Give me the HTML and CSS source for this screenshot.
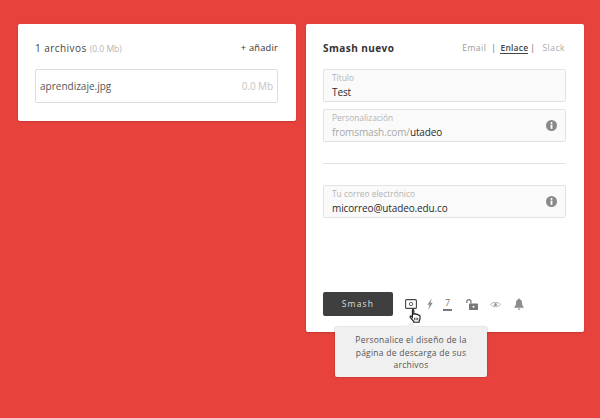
FILE: index.html
```html
<!DOCTYPE html>
<html lang="es">
<head>
    <meta charset="UTF-8"/>
    <title>Smash</title>
    <link rel="stylesheet" href="styles.css">
</head>
<body>
<main class="page">
    <section class="card files-card">
        <div class="card-head">
            <div class="files-title">1 archivos <span class="files-size">(0.0 Mb)</span></div>
            <div class="add-link">+ añadir</div>
        </div>
        <div class="file-row">
            <span class="file-name">aprendizaje.jpg</span>
            <span class="file-size">0.0 Mb</span>
        </div>
    </section>

    <section class="card smash-card">
        <div class="card-head">
            <div class="smash-title">Smash nuevo</div>
            <nav class="tabs">
                <span class="tab">Email</span>
                <span class="tab-sep sep-first">|</span>
                <span class="tab tab-active">Enlace</span>
                <span class="tab-sep sep-second">|</span>
                <span class="tab tab-last">Slack</span>
            </nav>
        </div>

        <div class="field">
            <div class="field-text">
                <div class="field-label">Título</div>
                <div class="field-value">Test</div>
            </div>
        </div>
        <div class="field field-second">
            <div class="field-text">
                <div class="field-label">Personalización</div>
                <div class="field-value"><span class="muted">fromsmash.com/</span>utadeo</div>
            </div>
            <svg class="info" viewBox="0 0 12 12"><circle cx="6" cy="6" r="6" fill="#8a8a8a"/><rect x="5" y="5" width="2" height="4.6" fill="#fff"/><circle cx="6" cy="3.2" r="1.1" fill="#fff"/></svg>
        </div>

        <hr class="divider">

        <div class="field">
            <div class="field-text">
                <div class="field-label">Tu correo electrónico</div>
                <div class="field-value">micorreo@utadeo.edu.co</div>
            </div>
            <svg class="info" viewBox="0 0 12 12"><circle cx="6" cy="6" r="6" fill="#8a8a8a"/><rect x="5" y="5" width="2" height="4.6" fill="#fff"/><circle cx="6" cy="3.2" r="1.1" fill="#fff"/></svg>
        </div>

        <div class="toolbar">
            <div class="smash-btn">Smash</div>
            <svg class="tool tool-camera" width="12" height="10" viewBox="0 0 12 10"><rect x="0.6" y="0.6" width="10.8" height="8.8" rx="1" fill="none" stroke="#444" stroke-width="1.1"/><circle cx="6" cy="5" r="1.7" fill="none" stroke="#555" stroke-width="0.9"/></svg>
            <svg class="tool tool-bolt" width="6" height="12" viewBox="0 0 6 12"><path d="M5 0 0.4 6.800H2.500L1.200 12 5.700 4.800H3.400Z" fill="#8c8c8c"/></svg>
            <div class="tool tool-days">7</div>
            <svg class="tool tool-lock" width="12" height="11" viewBox="0 0 12 11"><path d="M0.8 4V2.700a2.100 2.100 0 0 1 4.200 0V4.500" fill="none" stroke="#777" stroke-width="1.2"/><rect x="3" y="4.500" width="9" height="6.500" rx="0.6" fill="#777"/><circle cx="7.500" cy="7.700" r="1" fill="#fff"/></svg>
            <svg class="tool tool-eye" width="11" height="7" viewBox="0 0 11 7"><path d="M0.500 3.500C2.500 0.700 8.500 0.700 10.500 3.500C8.500 6.300 2.500 6.300 0.500 3.500Z" fill="none" stroke="#aaa" stroke-width="0.9"/><circle cx="5.500" cy="3.500" r="1.500" fill="#999"/></svg>
            <svg class="tool tool-bell" width="10" height="12" viewBox="0 0 10 12"><path d="M5 0.500C5.600 0.500 6 1 6 1.500C7.500 2 8 3.200 8 5C8 7 8.700 8 9.700 9V9.800H0.300V9C1.300 8 2 7 2 5C2 3.200 2.500 2 4 1.500C4 1 4.400 0.500 5 0.500ZM3.800 10.500H6.200C6.200 11.200 5.700 11.800 5 11.800C4.300 11.800 3.800 11.200 3.800 10.500Z" fill="#8c8c8c"/></svg>
        </div>
    </section>
</main>

<svg class="cursor" width="12" height="14" viewBox="0 0 14 16"><path d="M4 1.200C4 0.500 5.600 0.500 5.600 1.200V6L7 5.600C7.500 5.400 8.200 5.600 8.300 6.100L9.500 6.100C10 6 10.500 6.300 10.600 6.800L11.500 6.900C12.300 7 12.800 7.500 12.800 8.300V11C12.800 12.300 12.300 13 11.800 14V15.300H5.500V14.300C4.500 13 3 11.500 1.500 9.500C0.800 8.500 1.800 7.500 2.700 8.200L4 9.500Z" fill="#fff" stroke="#222" stroke-width="1.4"/><path d="M6.500 10V13M8.300 10V13M10.100 10V13" stroke="#222" stroke-width="0.9"/></svg>

<div class="tooltip">Personalice el diseño de la página de descarga de sus archivos</div>
</body>
</html>
```

FILE: styles.css
```css
html, body {
    height: 100%;
    margin: 0;
    padding: 0;
}

body {
    background-color: #e7423c;
    font-family: "Open Sans", Arial, sans-serif;
    color: #333;
    position: relative;
    overflow: hidden;
}

.page {
    display: flex;
    align-items: flex-start;
    gap: 10px;
    padding: 24px 0 0 18px;
}

.card {
    background-color: #fff;
    border-radius: 2px;
    box-shadow: 0 1px 2px rgba(0, 0, 0, 0.15);
    box-sizing: border-box;
}

.files-card {
    width: 278px;
    height: 97px;
    padding: 15px 18px 0 17px;
}

.smash-card {
    width: 278px;
    height: 308px;
    padding: 15px 18px 0 17px;
}

.card-head {
    display: flex;
    justify-content: space-between;
    align-items: center;
    height: 17px;
    margin-bottom: 13px;
}

.files-title {
    font-size: 10px;
    letter-spacing: 0.45px;
    color: #444;
}

.files-size {
    font-size: 8.5px;
    letter-spacing: 0;
    color: #b5b5b5;
}

.add-link {
    font-size: 9.3px;
    letter-spacing: 0.2px;
    color: #333;
}

.file-row {
    display: flex;
    justify-content: space-between;
    align-items: center;
    height: 34px;
    box-sizing: border-box;
    padding: 0 4px;
    border: 1px solid #ddd;
    border-radius: 2px;
}

.file-name {
    font-size: 10px;
    color: #555;
}

.file-size {
    font-size: 10px;
    letter-spacing: -0.1px;
    color: #c4c4c4;
}

.smash-title {
    font-size: 10px;
    font-weight: 700;
    letter-spacing: 0.45px;
    color: #333;
}

.tabs {
    display: flex;
    align-items: center;
    margin-right: 1px;
    font-size: 8.5px;
    letter-spacing: 0.5px;
    color: #999;
}

.tab-active {
    margin-left: 4px;
    font-weight: 600;
    letter-spacing: 0.2px;
    color: #444;
    border-bottom: 1px solid #444;
}

.tab-sep {
    color: #666;
}

.sep-first {
    margin-left: 5px;
}

.sep-second {
    margin-left: 2px;
}

.tab-last {
    margin-left: 7px;
    color: #aaa;
}

.field {
    display: flex;
    justify-content: space-between;
    align-items: center;
    height: 33px;
    box-sizing: border-box;
    padding: 0 8px;
    background-color: #fafafa;
    border: 1px solid #e3e3e3;
    border-radius: 2px;
}

.field-second {
    margin-top: 7px;
}

.field-label {
    margin-bottom: 2px;
    font-size: 8.4px;
    line-height: 11px;
    color: #b3b3b3;
}

.field-value {
    font-size: 10px;
    letter-spacing: -0.12px;
    line-height: 15px;
    color: #2b2b2b;
}

.muted {
    color: #a8a8a8;
}

.info {
    width: 11px;
    height: 11px;
}

.divider {
    height: 1px;
    margin: 21px 0;
    border: none;
    background-color: #e3e3e3;
}

.toolbar {
    display: flex;
    align-items: center;
    margin-top: 74px;
}

.smash-btn {
    width: 70px;
    height: 24px;
    background-color: #3f3f3f;
    border-radius: 2px;
    color: #ddd;
    font-size: 8.5px;
    letter-spacing: 1.2px;
    line-height: 24px;
    text-align: center;
}

.tool-camera {
    margin-left: 12px;
}

.tool-bolt {
    margin-left: 10px;
}

.tool-days {
    width: 9px;
    margin-left: 10px;
    padding-bottom: 1px;
    font-size: 9px;
    line-height: 11px;
    text-align: center;
    color: #777;
    border-bottom: 2px solid #777;
}

.tool-lock {
    margin-left: 14px;
}

.tool-eye {
    margin-left: 12px;
}

.tool-bell {
    margin-left: 13px;
}

.cursor {
    position: absolute;
    left: 409px;
    top: 309px;
}

.tooltip {
    position: absolute;
    left: 335px;
    top: 327px;
    width: 152px;
    height: 50px;
    box-sizing: border-box;
    padding: 7px 10px 0;
    background-color: #f0f0f0;
    border-radius: 2px;
    box-shadow: 0 0 2px rgba(0, 0, 0, 0.35);
    font-size: 8.5px;
    line-height: 12.5px;
    letter-spacing: 0.25px;
    text-align: center;
    color: #555;
}

.tooltip::before {
    content: "";
    position: absolute;
    left: 72px;
    top: -4px;
    width: 8px;
    height: 8px;
    background-color: #f0f0f0;
    transform: rotate(45deg);
}
```
